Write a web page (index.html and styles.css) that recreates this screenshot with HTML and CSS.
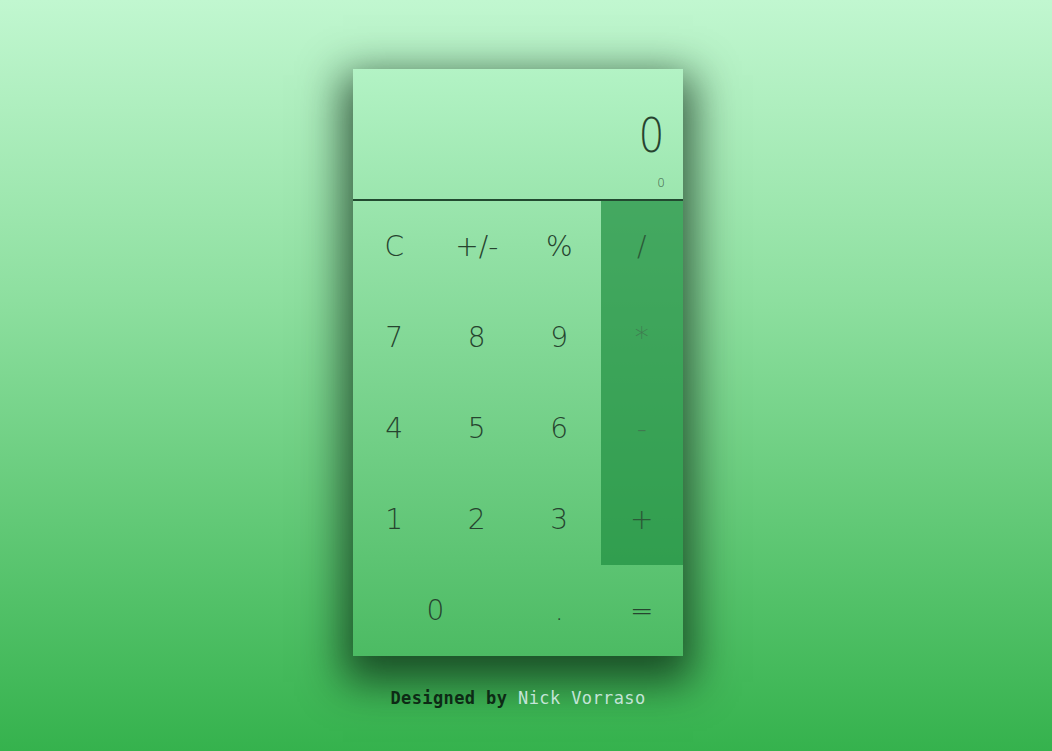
FILE: index.html
```html
<!DOCTYPE html>
<html>
<head>
<meta charset="utf-8">
<link rel="stylesheet" href="styles.css">
</head>
<body>
<main class="page">
  <div class="calc">
    <div class="display">
      <div class="current">0</div>
      <div class="previous">0</div>
    </div>
    <div class="keys">
      <div class="key">C</div>
      <div class="key">+/-</div>
      <div class="key">%</div>
      <div class="key op">/</div>
      <div class="key">7</div>
      <div class="key">8</div>
      <div class="key">9</div>
      <div class="key op light">*</div>
      <div class="key">4</div>
      <div class="key">5</div>
      <div class="key">6</div>
      <div class="key op light">-</div>
      <div class="key">1</div>
      <div class="key">2</div>
      <div class="key">3</div>
      <div class="key op">+</div>
      <div class="key wide">0</div>
      <div class="key">.</div>
      <div class="key">=</div>
    </div>
  </div>
  <p class="credit">Designed by <span class="name">Nick Vorraso</span></p>
</main>
</body>
</html>
```
FILE: styles.css
```css
html, body {
  margin: 0;
  height: 100%;
}
body {
  background: linear-gradient(to bottom, #c1f7d0 0%, #8ddf9f 40%, #35b24d 100%);
  font-family: "DejaVu Sans", sans-serif;
}
.page {
  display: flex;
  flex-direction: column;
  align-items: center;
  padding: 69px 16px 0 0;
  height: 100%;
  box-sizing: border-box;
}
.calc {
  width: 330px;
  height: 587px;
  background: linear-gradient(to bottom, #b3f3c5 0%, #93e1a6 30%, #4cbb63 100%);
  box-shadow: 0 16px 40px 10px rgba(8, 36, 16, 0.72);
  display: flex;
  flex-direction: column;
}
.display {
  height: 130px;
  border-bottom: 2px solid #224a30;
  display: flex;
  flex-direction: column;
  align-items: flex-end;
  padding: 0 18px 0 0;
  color: #27432f;
}
.current {
  font-size: 48px;
  font-weight: 200;
  line-height: 1;
  margin-top: 42px;
  transform: scaleX(0.85);
  transform-origin: right;
}
.previous {
  font-size: 12px;
  font-weight: 300;
  margin-top: 17px;
  color: #3c5a45;
}
.keys {
  flex: 1;
  display: grid;
  grid-template-columns: repeat(4, 1fr);
  grid-template-rows: repeat(5, 1fr);
}
.key {
  display: flex;
  align-items: center;
  justify-content: center;
  font-size: 28px;
  font-weight: 200;
  color: #26442f;
}
.key.op {
  background: rgba(32, 142, 64, 0.7);
  color: #2b5a38;
}
.key.op.light {
  color: #3f7a50;
}
.key.wide {
  grid-column: span 2;
}
.credit {
  margin: 32px 0 0;
  font-family: "DejaVu Sans Mono", monospace;
  font-weight: bold;
  font-size: 17px;
  letter-spacing: 0.4px;
  color: #0d2a15;
}
.credit .name {
  color: #c4e4d8;
  font-weight: normal;
}
```
